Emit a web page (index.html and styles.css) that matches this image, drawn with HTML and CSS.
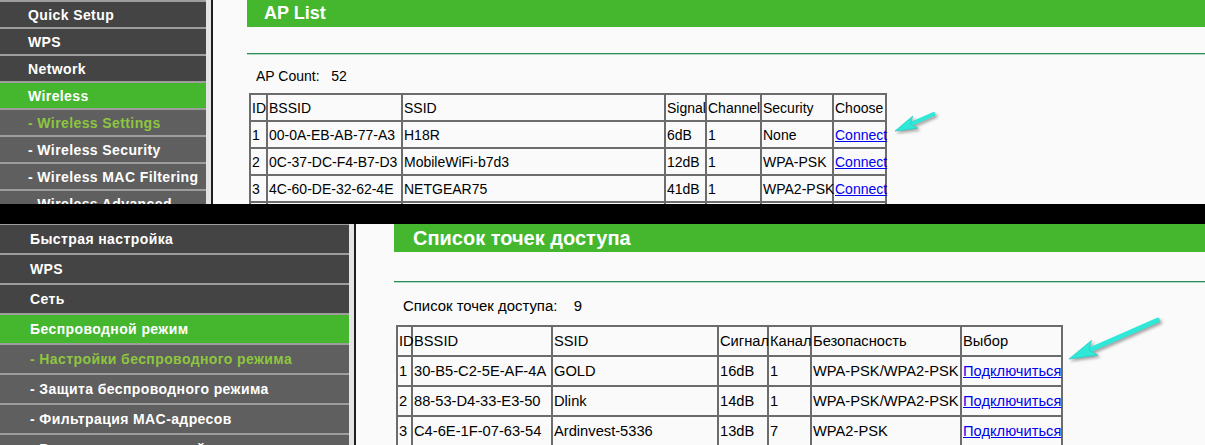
FILE: index.html
```html
<!DOCTYPE html>
<html lang="ru">
<head>
<meta charset="utf-8">
<title>AP List</title>
<link rel="stylesheet" href="styles.css">
</head>
<body>
<div class="shot">
  <section class="panel panel-en">
    <nav class="side">
      <ul class="menu">
        <li class="item">Quick Setup</li>
        <li class="item">WPS</li>
        <li class="item">Network</li>
        <li class="item on">Wireless</li>
        <li class="item sub cur">- Wireless Settings</li>
        <li class="item sub">- Wireless Security</li>
        <li class="item sub">- Wireless MAC Filtering</li>
        <li class="item sub">- Wireless Advanced</li>
      </ul>
    </nav>
    <div class="gutter"></div>
    <main class="content">
      <h1 class="title">AP List</h1>
      <div class="rule"></div>
      <p class="count">AP Count:&nbsp;&nbsp;&nbsp;52</p>
      <table class="ap">
        <tr><th>ID</th><th>BSSID</th><th>SSID</th><th>Signal</th><th>Channel</th><th>Security</th><th>Choose</th></tr>
        <tr><td>1</td><td>00-0A-EB-AB-77-A3</td><td>H18R</td><td>6dB</td><td>1</td><td>None</td><td><a href="#">Connect</a></td></tr>
        <tr><td>2</td><td>0C-37-DC-F4-B7-D3</td><td>MobileWiFi-b7d3</td><td>12dB</td><td>1</td><td>WPA-PSK</td><td><a href="#">Connect</a></td></tr>
        <tr><td>3</td><td>4C-60-DE-32-62-4E</td><td>NETGEAR75</td><td>41dB</td><td>1</td><td>WPA2-PSK</td><td><a href="#">Connect</a></td></tr>
        <tr><td>4</td><td>10-FE-ED-5A-21-0C</td><td>TP-LINK_210C</td><td>30dB</td><td>1</td><td>WPA2-PSK</td><td><a href="#">Connect</a></td></tr>
      </table>
    </main>
    <svg class="arrow" width="1205" height="204" viewBox="0 0 1205 204" aria-hidden="true">
      <g class="arrow-shape">
        <line x1="910.6" y1="124.2" x2="933.5" y2="114.2" stroke-width="4" stroke-linecap="round"/>
        <polygon points="895,131 912.6,116.2 910.6,124.2 917.8,128.2"/>
      </g>
    </svg>
  </section>
  <div class="bar"></div>
  <section class="panel panel-ru">
    <nav class="side">
      <ul class="menu">
        <li class="item">Быстрая настройка</li>
        <li class="item">WPS</li>
        <li class="item">Сеть</li>
        <li class="item on">Беспроводной режим</li>
        <li class="item sub cur">- Настройки беспроводного режима</li>
        <li class="item sub">- Защита беспроводного режима</li>
        <li class="item sub">- Фильтрация MAC-адресов</li>
        <li class="item sub">- Расширенные настройки</li>
      </ul>
    </nav>
    <div class="gutter"></div>
    <main class="content">
      <h1 class="title">Список точек доступа</h1>
      <div class="rule"></div>
      <p class="count">Список точек доступа:&nbsp;&nbsp;&nbsp;&nbsp;9</p>
      <table class="ap">
        <tr><th>ID</th><th>BSSID</th><th>SSID</th><th>Сигнал</th><th>Канал</th><th>Безопасность</th><th>Выбор</th></tr>
        <tr><td>1</td><td>30-B5-C2-5E-AF-4A</td><td>GOLD</td><td>16dB</td><td>1</td><td>WPA-PSK/WPA2-PSK</td><td><a href="#">Подключиться</a></td></tr>
        <tr><td>2</td><td>88-53-D4-33-E3-50</td><td>Dlink</td><td>14dB</td><td>1</td><td>WPA-PSK/WPA2-PSK</td><td><a href="#">Подключиться</a></td></tr>
        <tr><td>3</td><td>C4-6E-1F-07-63-54</td><td>Ardinvest-5336</td><td>13dB</td><td>7</td><td>WPA2-PSK</td><td><a href="#">Подключиться</a></td></tr>
        <tr><td>4</td><td>00-27-19-C1-8E-22</td><td>Home</td><td>9dB</td><td>6</td><td>WPA2-PSK</td><td><a href="#">Подключиться</a></td></tr>
      </table>
    </main>
    <svg class="arrow" width="1205" height="221" viewBox="0 0 1205 221" aria-hidden="true">
      <g class="arrow-shape">
        <line x1="1089.1" y1="126.2" x2="1157.5" y2="96.2" stroke-width="5" stroke-linecap="round"/>
        <polygon points="1069,135 1091.4,116.5 1089.1,126.2 1097.8,131.1"/>
      </g>
    </svg>
  </section>
</div>
</body>
</html>
```
FILE: styles.css
```css
html, body {
  margin: 0;
  padding: 0;
}
body {
  width: 1205px;
  height: 445px;
  overflow: hidden;
  background: #000;
  font-family: "Liberation Sans", Arial, sans-serif;
  color: #000;
}
.shot {
  width: 1205px;
}
.panel {
  display: flex;
  position: relative;
  overflow: hidden;
  background: #fafafa;
}
.panel-en { height: 204px; }
.panel-ru { height: 221px; }
.bar {
  height: 20px;
  background: #000;
}

/* sidebar */
.side {
  flex: 0 0 206px;
  background: #444;
}
.panel-ru .side { flex-basis: 349px; }
.menu {
  list-style: none;
  margin: 0;
  padding: 0;
}
.panel-ru .menu { margin-top: -1px; }
.item {
  border-top: 2px solid #9d9d9d;
  height: 24px;
  padding-top: 1px;
  line-height: 25px;
  padding-left: 28px;
  background: #444;
  color: #fff;
  font-size: 14px;
  font-weight: bold;
  letter-spacing: 0.4px;
  white-space: nowrap;
}
.panel-ru .item {
  height: 28px;
  padding-top: 0;
  line-height: 28px;
  padding-left: 30px;
}
.item.on { background: #44b72f; }
.item.sub { background: #5f5f5f; }
.item.cur { color: #8dc63f; }

.gutter {
  flex: 0 0 5px;
  background: #e4e4e4;
  border-right: 2px solid #1e1e1e;
}

/* content */
.content {
  flex: 1;
  min-width: 0;
  padding-left: 34px;
}
.panel-ru .content { padding-left: 38px; }
.title {
  margin: 0;
  height: 27px;
  line-height: 27px;
  padding-left: 17px;
  background: #44b72f;
  color: #fff;
  font-size: 18px;
  font-weight: bold;
  white-space: nowrap;
}
.panel-ru .title {
  height: 28px;
  line-height: 28px;
  padding-left: 19px;
  font-size: 20px;
}
.rule {
  height: 1px;
  margin-top: 26px;
  background: #2b8c5c;
  border-bottom: 1px solid #b6dac6;
}
.panel-ru .rule { margin-top: 29px; }
.count {
  margin: 13px 0 9px;
  padding-left: 9px;
  font-size: 14px;
  line-height: 16px;
  white-space: nowrap;
}
.panel-ru .count {
  margin: 15px 0 10px;
  font-size: 14.9px;
  line-height: 17px;
}

/* table */
.ap {
  margin-left: 2px;
  border-collapse: separate;
  border-spacing: 0;
  border: 1px solid #6c6c6c;
  table-layout: fixed;
  width: 638px;
  font-size: 14px;
}
.panel-ru .ap {
  width: 667px;
  font-size: 14.7px;
}
.ap tr { height: 27px; }
.panel-ru .ap tr { height: 30px; }
.ap th, .ap td {
  box-sizing: border-box;
  border: 1px solid #6c6c6c;
  padding: 0 0 0 1px;
  font-weight: normal;
  text-align: left;
  vertical-align: middle;
  white-space: nowrap;
}
.panel-en .ap th:nth-child(1) { width: 17px; }
.panel-en .ap th:nth-child(2) { width: 135px; }
.panel-en .ap th:nth-child(3) { width: 263px; }
.panel-en .ap th:nth-child(4) { width: 41px; }
.panel-en .ap th:nth-child(5) { width: 55px; }
.panel-en .ap th:nth-child(6) { width: 72px; }
.panel-en .ap th:nth-child(7) { width: 53px; }
.panel-ru .ap th:nth-child(1) { width: 15px; }
.panel-ru .ap th:nth-child(2) { width: 140px; }
.panel-ru .ap th:nth-child(3) { width: 166px; }
.panel-ru .ap th:nth-child(4) { width: 50px; }
.panel-ru .ap th:nth-child(5) { width: 43px; }
.panel-ru .ap th:nth-child(6) { width: 150px; }
.panel-ru .ap th:nth-child(7) { width: 101px; }
.ap a {
  color: #0000f0;
  text-decoration: underline;
}

/* arrows overlay */
.arrow {
  position: absolute;
  left: 0;
  top: 0;
  pointer-events: none;
  overflow: visible;
}
.arrow-shape {
  fill: #2fe8d8;
  stroke: #2fe8d8;
  filter: drop-shadow(2px 2px 1.5px rgba(0, 0, 0, 0.35));
}
.arrow-shape polygon {
  stroke: #22cfc4;
  stroke-width: 0.8;
  stroke-linejoin: round;
}
```
